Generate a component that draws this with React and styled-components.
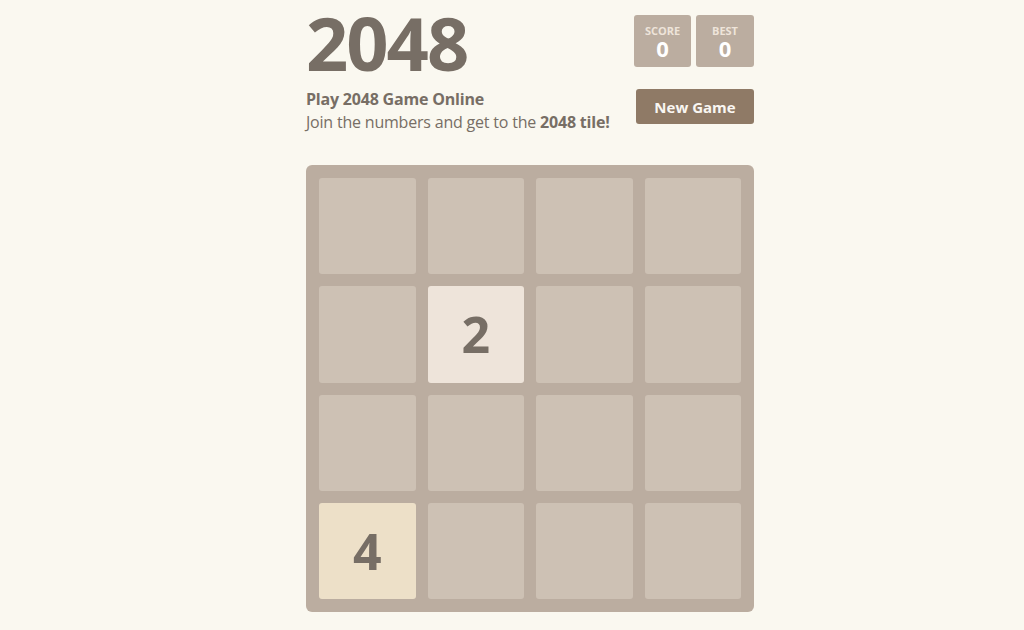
import React from 'react'
import styled, { createGlobalStyle } from 'styled-components'

const GlobalStyle = createGlobalStyle`
  html, body {
    margin: 0;
    padding: 0;
    background: #faf8f0;
    font-family: "Open Sans", "Noto Sans", sans-serif;
    color: #776e65;
  }
`

const Page = styled.div`
  display: flex;
  padding-left: 306px;
`

const Container = styled.div`
  width: 448px;
`

const Header = styled.div`
  display: flex;
  justify-content: space-between;
  align-items: flex-start;
`

const Title = styled.h1`
  margin: 6px 0 0 0;
  font-size: 74px;
  line-height: 74px;
  font-weight: 700;
  letter-spacing: -2px;
  color: #776e65;
`

const Scores = styled.div`
  display: flex;
  gap: 5px;
  margin-top: 15px;
`

const ScoreBox = styled.div`
  width: ${(p) => p.width}px;
  height: 52px;
  background: #bbada0;
  border-radius: 3px;
  display: flex;
  flex-direction: column;
  align-items: center;
  padding-top: 9px;
  box-sizing: border-box;
`

const ScoreLabel = styled.div`
  font-size: 11px;
  line-height: 13px;
  font-weight: 700;
  color: #eee4da;
  text-transform: uppercase;
`

const ScoreValue = styled.div`
  font-size: 22px;
  line-height: 23px;
  font-weight: 700;
  color: #ffffff;
`

const Intro = styled.div`
  display: flex;
  justify-content: space-between;
  align-items: flex-start;
  margin-top: 8px;
`

const IntroText = styled.div`
  font-size: 16px;
  line-height: 23px;
  color: #776e65;
  letter-spacing: -0.2px;
`

const Strong = styled.strong`
  font-weight: 700;
`

const Lead = styled.div`
  font-weight: 700;
`

const NewGame = styled.button`
  width: 118px;
  height: 35px;
  margin-top: 1px;
  border: 0;
  border-radius: 3px;
  background: #8f7a66;
  color: #f9f6f2;
  font-family: inherit;
  font-size: 15px;
  font-weight: 700;
  cursor: pointer;
`

const Board = styled.div`
  margin-top: 31px;
  width: 448px;
  height: 447px;
  box-sizing: border-box;
  padding: 13px;
  background: #bbada0;
  border-radius: 6px;
  display: grid;
  grid-template-columns: repeat(4, 1fr);
  grid-template-rows: repeat(4, 1fr);
  gap: 12px;
`

const tileColors = {
  0: '#cdc1b4',
  2: '#eee4da',
  4: '#ede0c8',
}

const Tile = styled.div`
  background: ${(p) => tileColors[p.value]};
  border-radius: 3px;
  display: flex;
  align-items: center;
  justify-content: center;
  font-size: 50px;
  font-weight: 700;
  color: #776e65;
`

const grid = [
  [0, 0, 0, 0],
  [0, 2, 0, 0],
  [0, 0, 0, 0],
  [4, 0, 0, 0],
]

export default function App() {
  return (
    <>
      <GlobalStyle />
      <Page>
        <Container>
          <Header>
            <Title>2048</Title>
            <Scores>
              <ScoreBox width={57}>
                <ScoreLabel>Score</ScoreLabel>
                <ScoreValue>0</ScoreValue>
              </ScoreBox>
              <ScoreBox width={58}>
                <ScoreLabel>Best</ScoreLabel>
                <ScoreValue>0</ScoreValue>
              </ScoreBox>
            </Scores>
          </Header>
          <Intro>
            <IntroText>
              <Lead>Play 2048 Game Online</Lead>
              <div>
                Join the numbers and get to the <Strong>2048 tile!</Strong>
              </div>
            </IntroText>
            <NewGame>New Game</NewGame>
          </Intro>
          <Board>
            {grid.flat().map((v, i) => (
              <Tile key={i} value={v}>
                {v ? v : ''}
              </Tile>
            ))}
          </Board>
        </Container>
      </Page>
    </>
  )
}
